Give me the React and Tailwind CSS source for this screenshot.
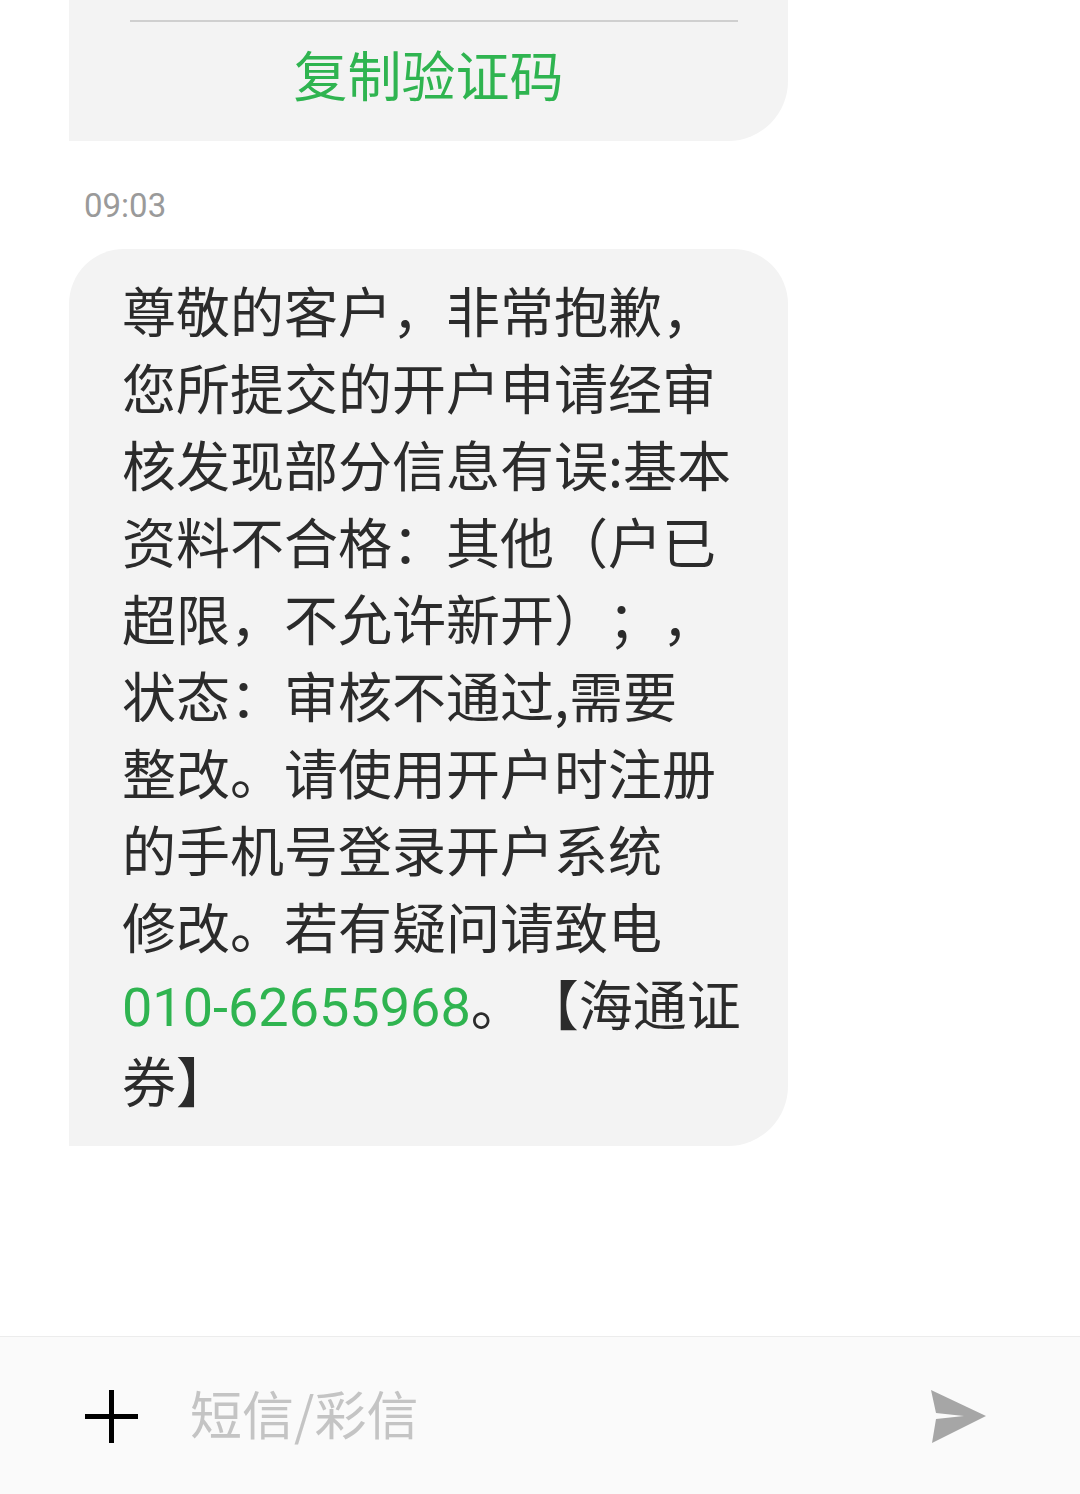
import React from "react";

const CJK = { fontFamily: '"Noto Sans CJK SC", "Noto Sans", sans-serif', textSpacingTrim: "space-all" };
const NUM = { fontFamily: 'Roboto, "Noto Sans CJK SC", sans-serif' };

const lines = [
  "尊敬的客户，非常抱歉，",
  "您所提交的开户申请经审",
  "核发现部分信息有误:基本",
  "资料不合格：其他（户已",
  "超限，不允许新开）；，",
  "状态：审核不通过,需要",
  "整改。请使用开户时注册",
  "的手机号登录开户系统",
  "修改。若有疑问请致电",
];

export default function App() {
  return (
    <div className="w-[1080px] h-[1494px] bg-white flex flex-col overflow-hidden [text-spacing-trim:space-all]" style={CJK}>
      <div className="flex-1 flex flex-col">
        {/* first bubble (cut off) */}
        <div className="ml-[69px] w-[719px] h-[141px] bg-[#f3f3f3] rounded-br-[60px] flex flex-col">
          <div className="mt-[20px] ml-[61px] mr-[50px] h-[2px] bg-[#cfcfcf]" />
          <div className="mt-[22px] text-center text-[54px] leading-[60px] text-[#2fb450]">
            复制验证码
          </div>
        </div>

        {/* time */}
        <div className="mt-[46px] pl-[84px] text-[33px] leading-[38px] text-[#9a9a9a]" style={NUM}>
          09:03
        </div>

        {/* second bubble */}
        <div className="mt-[24px] ml-[69px] w-[719px] bg-[#f3f3f3] rounded-tl-[55px] rounded-tr-[55px] rounded-br-[60px] pl-[53px] pt-[22px] pb-[28px] text-[54px] leading-[77px] text-[#2b2b2b]">
          {lines.map((l, i) => (
            <div key={i} className="whitespace-pre h-[77px]">{l}</div>
          ))}
          <div className="whitespace-pre h-[77px] overflow-visible">
            <span className="text-[#2fb450] leading-none" style={NUM}>010-62655968</span>
            <span>。【海通证</span>
          </div>
          <div className="whitespace-pre h-[77px]">券】</div>
        </div>
      </div>

      {/* bottom input bar */}
      <div className="h-[158px] border-t border-[#ececec] bg-[#fafafa] flex items-center pl-[85px] pr-[93px] pt-[2px]">
        <svg width="53" height="53" viewBox="0 0 53 53" className="shrink-0">
          <path d="M26.5 0 V53 M0 26.5 H53" stroke="#000" strokeWidth="5" fill="none" />
        </svg>
        <div className="flex-1 ml-[52px] text-[52px] leading-[60px] text-[#c4c4c4] -mt-[8px]">短信/彩信</div>
        <svg width="56" height="54" viewBox="0 0 56 54" className="shrink-0">
          <path d="M0 0 L55 26 L1 53 L5 29 L33 26 L5 23 Z" fill="#a6a6a6" />
        </svg>
      </div>
    </div>
  );
}
